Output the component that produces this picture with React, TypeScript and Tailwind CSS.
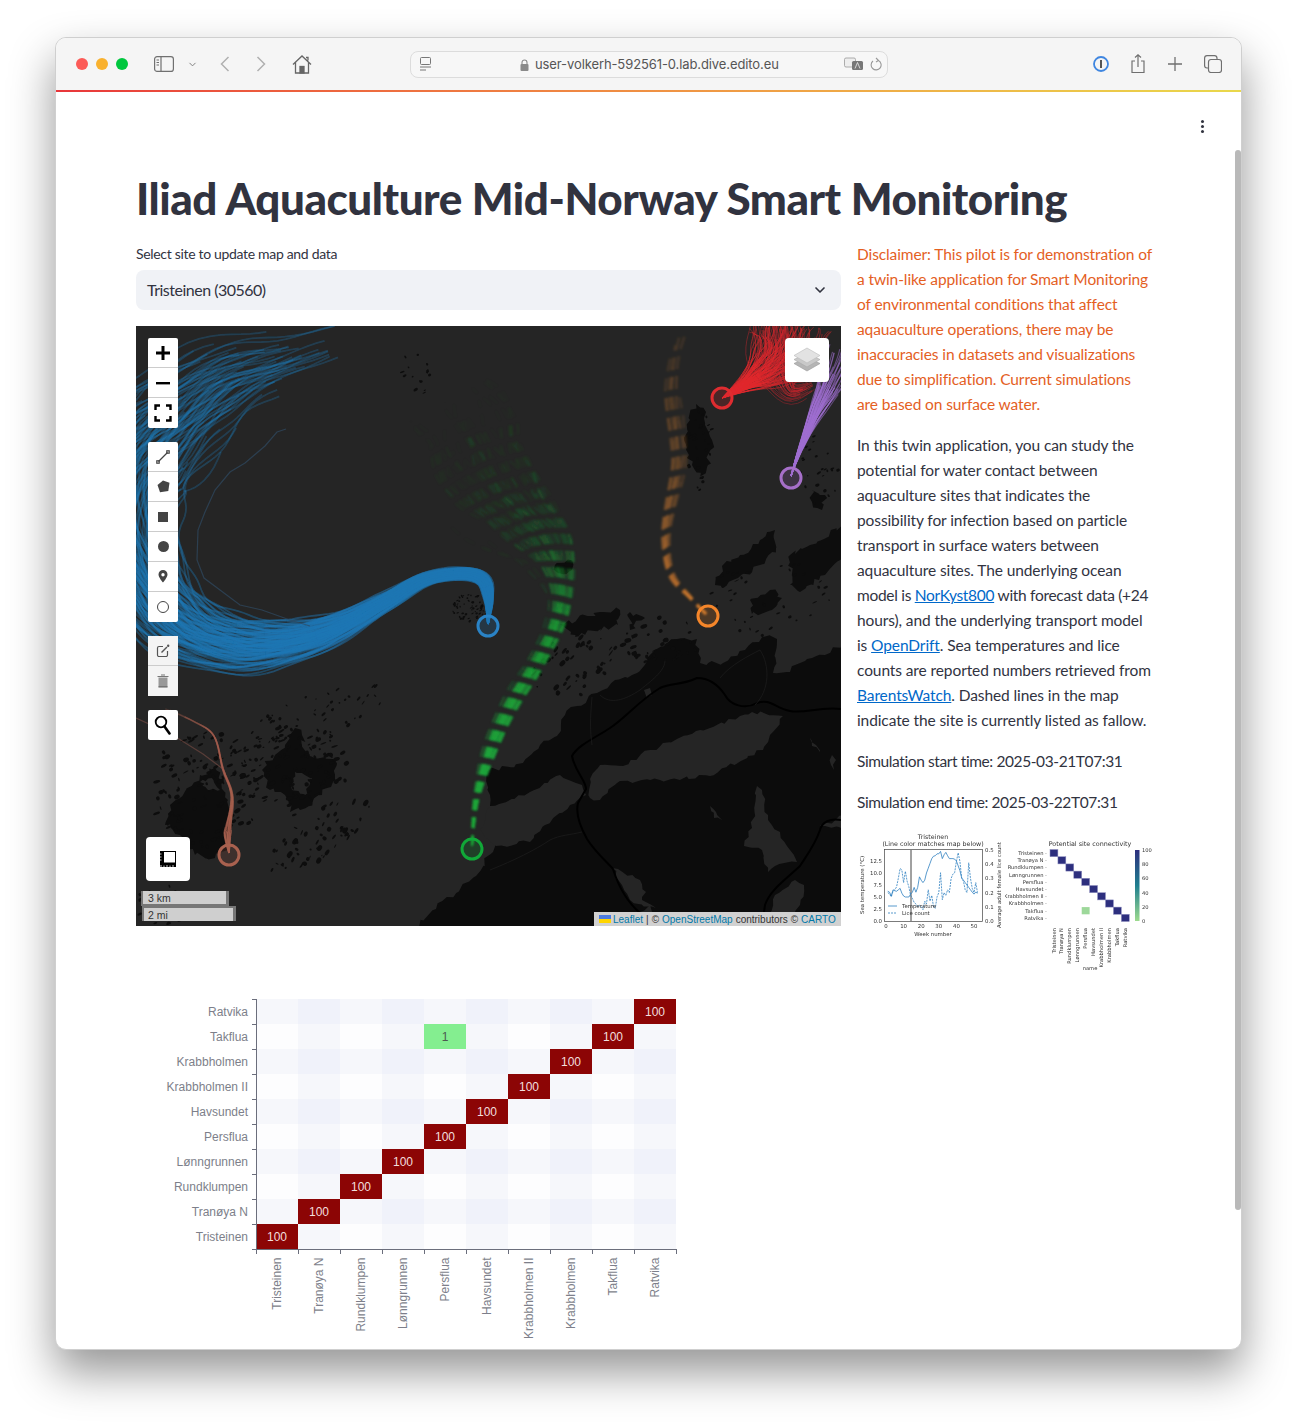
import { ChevronDown } from "lucide-react";

type Pt = [number, number, number];

function rng(seed: number) {
  let s = seed;
  return () => {
    s = (s * 16807) % 2147483647;
    return (s - 1) / 2147483646;
  };
}

// sample a catmull-rom line through the control points
function sample(points: Pt[], perSeg: number): Pt[] {
  const out: Pt[] = [];
  for (let i = 0; i < points.length - 1; i++) {
    const p0 = points[Math.max(i - 1, 0)];
    const p1 = points[i];
    const p2 = points[i + 1];
    const p3 = points[Math.min(i + 2, points.length - 1)];
    for (let k = 0; k < perSeg; k++) {
      const t = k / perSeg;
      const v = [0, 1, 2].map(
        (j) =>
          0.5 *
          (2 * p1[j] +
            (p2[j] - p0[j]) * t +
            (2 * p0[j] - 5 * p1[j] + 4 * p2[j] - p3[j]) * t * t +
            (3 * p1[j] - p0[j] - 3 * p2[j] + p3[j]) * t * t * t)
      );
      out.push([v[0], v[1], v[2]]);
    }
  }
  out.push(points[points.length - 1]);
  return out;
}

// break up the straight edges of a polygon so it reads as a coastline
function coast(poly: string, seed: number, amp = 5, step = 5) {
  const nums = (poly.match(/-?[\d.]+/g) ?? []).map(Number);
  const r = rng(seed);
  const out: string[] = [];
  for (let i = 0; i < nums.length; i += 2) {
    const x1 = nums[i];
    const y1 = nums[i + 1];
    const x2 = nums[(i + 2) % nums.length];
    const y2 = nums[(i + 3) % nums.length];
    const len = Math.hypot(x2 - x1, y2 - y1);
    const n = Math.max(1, Math.round(len / step));
    for (let k = 0; k < n; k++) {
      const t = k / n;
      const j = k === 0 ? 0 : amp;
      out.push(`${(x1 + (x2 - x1) * t + (r() - 0.5) * j).toFixed(1)},${(y1 + (y2 - y1) * t + (r() - 0.5) * j).toFixed(1)}`);
    }
  }
  return `M${out.join(" L")} Z`;
}

function Plume({
  points,
  count,
  color,
  width,
  dash,
  from,
  to,
  seed,
  chunks = 6,
  soft = "soft",
}: {
  points: Pt[];
  count: number;
  color: string;
  width: number;
  dash?: string;
  from: number;
  to: number;
  seed: number;
  chunks?: number;
  soft?: string;
}) {
  const r = rng(seed);
  const base = sample(points, 8);
  const lines = [];
  for (let l = 0; l < count; l++) {
    const u = r() + r() - 1;
    const ph = r() * 6;
    const end = 0.72 + r() * 0.28;
    const pts = base.slice(0, Math.floor(base.length * end)).map((p, i) => {
      const a = base[Math.max(i - 1, 0)];
      const b = base[Math.min(i + 1, base.length - 1)];
      const dx = b[0] - a[0];
      const dy = b[1] - a[1];
      const d = Math.hypot(dx, dy) || 1;
      const o = u * p[2] + Math.sin(i * 0.5 + ph) * p[2] * 0.06;
      return [p[0] - (dy / d) * o, p[1] + (dx / d) * o];
    });
    const size = Math.ceil(pts.length / chunks);
    let run = 0;
    for (let c = 0; c < chunks; c++) {
      const part = pts.slice(c * size, (c + 1) * size + 1);
      if (part.length < 2) continue;
      lines.push(
        <polyline
          key={`${l}-${c}`}
          points={part.map((p) => `${p[0].toFixed(1)},${p[1].toFixed(1)}`).join(" ")}
          fill="none"
          stroke={color}
          strokeWidth={width}
          strokeDasharray={dash}
          strokeDashoffset={dash ? run : undefined}
          opacity={from + ((to - from) * c) / (chunks - 1)}
        />
      );
      // carry the dash phase over into the next piece
      for (let i = 1; i < part.length; i++) {
        run += Math.hypot(part[i][0] - part[i - 1][0], part[i][1] - part[i - 1][1]);
      }
    }
  }
  return <g filter={`url(#${soft})`}>{lines}</g>;
}

function Islands({ x, y, rx, ry, n, seed, max = 3, angle = 0 }: { x: number; y: number; rx: number; ry: number; n: number; seed: number; max?: number; angle?: number }) {
  const r = rng(seed);
  const items = [];
  for (let i = 0; i < n; i++) {
    const a = r() * 6.283;
    const d = Math.sqrt(r());
    const cx = x + Math.cos(a) * d * rx;
    const cy = y + Math.sin(a) * d * ry;
    items.push(
      <ellipse
        key={i}
        cx={cx}
        cy={cy}
        rx={0.6 + r() * max}
        ry={0.5 + r() * max * 0.6}
        transform={`rotate(${-35 + r() * 20} ${cx} ${cy})`}
      />
    );
  }
  return <g fill="#0d0d0d" transform={`rotate(${angle} ${x} ${y})`}>{items}</g>;
}

function Marker({ x, y, color }: { x: number; y: number; color: string }) {
  return <circle cx={x} cy={y} r={10} fill={color} fillOpacity={0.2} stroke={color} strokeWidth={3} />;
}

const fjords = [
  "490,806 530,792 560,775 582,785 586,795 570,805 545,825 530,842 496,846 480,830",
  "590,779 600,765 623,766 650,750 677,739 710,728 740,716 752,712 783,716 770,735 763,750 710,776 660,780 617,783 600,800 590,798",
  "757,786 762,790 768,820 780,832 797,862 775,866 768,872 762,850 744,846 752,828",
  "612,868 640,880 646,892 642,900 656,908 630,900 622,885",
  "775,895 795,880 804,885 800,905 785,930 765,930",
  "820,826 845,815 845,830 825,826",
  "810,738 816,745 820,752 812,746",
  "832,755 836,760 834,770 831,765",
  "710,806 716,812 722,820 714,818",
  "640,912 650,905 660,918 648,916",
  "644,690 650,688 652,695 646,698",
];

const isles = [
  "186,790 200,775 215,768 222,782 228,800 233,825 228,845 215,858 195,855 180,835 165,825 170,805",
  "262,770 275,755 285,745 295,728 302,735 305,755 320,758 335,760 335,780 322,795 300,810 290,812 285,795 270,790",
  "696,404 706,412 705,425 712,440 708,465 700,478 692,465 684,440 690,420",
  "715,585 722,566 740,555 760,540 775,530 776,548 760,565 738,578 722,588",
  "750,600 770,590 782,598 772,610 752,614",
  "790,555 810,545 845,525 845,555 825,575 800,592 790,585",
  "560,625 600,612 620,610 618,625 575,635",
  "630,612 645,618 630,630",
  "555,565 570,560 572,570 558,573",
  "812,490 825,495 822,510 812,502",
];

function MapDrawing() {
  return (
    <svg viewBox="136 326 705 600" className="block w-full h-full">
      <defs>
        <filter id="soft" x="-10%" y="-10%" width="120%" height="120%">
          <feGaussianBlur stdDeviation="0.6" />
        </filter>
        <filter id="softer" x="-10%" y="-10%" width="120%" height="120%">
          <feGaussianBlur stdDeviation="1.1" />
        </filter>
      </defs>
      <rect x="136" y="326" width="705" height="600" fill="#252525" />
      {/* mainland */}
      <path
        fill="#0c0c0c"
        d={coast(
          "412,932 436,909 476,876 496,843 490,806 484,772 523,763 540,745 557,736 565,715 577,706 597,693 615,680 637,673 655,650 677,639 697,639 700,663 723,663 745,650 767,636 777,639 773,673 790,672 807,659 825,655 848,640 848,932",
          3
        )}
      />
      {/* fjords and lakes */}
      <g fill="#252525">
        {fjords.map((f, i) => (
          <path key={i} d={coast(f, 100 + i, 4, 5)} />
        ))}
      </g>
      {/* roads */}
      <g fill="none">
        <path
          stroke="#000"
          strokeWidth="2"
          d="M841,709 C820,706 805,714 790,711 C775,708 770,698 757,703 C745,710 730,705 725,695 C715,680 705,678 697,678 C680,686 672,682 660,688 C640,700 625,718 610,728 C595,738 578,745 572,756 C575,772 586,780 586,789 L578,803 C575,815 582,830 587,839 C595,852 610,865 613,869 C618,885 625,900 640,913"
        />
        <path stroke="#000" strokeWidth="2" d="M841,820 C830,818 822,822 820,830 C815,845 805,858 800,866 C785,880 770,890 765,905 L762,926" />
        <path stroke="#1c1c1c" strokeWidth="0.8" d="M490,870 C515,860 535,850 550,840 C560,835 570,835 582,832" />
        <path stroke="#1c1c1c" strokeWidth="0.8" d="M592,697 C590,720 590,730 592,745 M600,695 C610,705 625,700 640,690 C655,678 665,670 665,660 M720,678 C730,665 750,655 760,650 C770,665 770,690 755,705" />
      </g>
      {/* islands */}
      <g fill="#0d0d0d">
        {isles.map((f, i) => (
          <path key={i} d={coast(f, 200 + i, 6, 4)} />
        ))}
      </g>
      <path fill="#252525" d={coast("200,782 212,778 220,790 208,790", 301, 3, 3)} />
      <path fill="#252525" d={coast("295,772 312,778 305,795 292,790", 302, 3, 3)} />
      <Islands x={205} y={790} rx={55} ry={60} n={120} seed={11} max={3} />
      <Islands x={295} y={770} rx={55} ry={45} n={110} seed={23} max={3} />
      <Islands x={310} y={720} rx={90} ry={25} n={60} seed={31} max={2} angle={-25} />
      <Islands x={320} y={835} rx={60} ry={22} n={60} seed={37} max={3} angle={-35} />
      <Islands x={470} y={608} rx={18} ry={14} n={70} seed={41} max={1} />
      <Islands x={415} y={375} rx={18} ry={22} n={16} seed={43} max={2} />
      <Islands x={700} y={450} rx={15} ry={40} n={30} seed={47} max={2} />
      <Islands x={770} y={600} rx={60} ry={45} n={40} seed={53} max={2} />
      <Islands x={575} y={665} rx={45} ry={30} n={50} seed={59} max={3} angle={-25} />
      <Islands x={660} y={640} rx={40} ry={24} n={40} seed={61} max={3} />
      <Islands x={820} y={470} rx={20} ry={40} n={24} seed={67} max={2} />
      <Islands x={165} y={905} rx={30} ry={20} n={24} seed={71} max={2} />

      {/* particle tracks */}
      <Plume
        seed={5}
        points={[
          [488, 624, 0],
          [489, 600, 5],
          [484, 580, 8],
          [462, 573, 7],
          [425, 579, 8],
          [385, 601, 11],
          [340, 625, 17],
          [290, 640, 26],
          [240, 642, 34],
          [190, 626, 42],
          [155, 590, 50],
          [130, 530, 64],
          [135, 470, 72],
          [175, 425, 68],
          [225, 385, 52],
          [285, 362, 36],
          [345, 342, 24],
        ]}
        count={130}
        color="#1f77b4"
        width={1.8}
        from={0.6}
        to={0.3}
        chunks={8}
      />
      <polyline
        fill="none"
        stroke="#2f4a63"
        strokeOpacity="0.7"
        strokeWidth="1.2"
        points="286,429 277,432 265,446 245,463 230,472 215,490 205,512 198,530 197,560 204,578 220,590 240,605 262,610 290,620 310,626"
      />
      <Plume
        seed={7}
        points={[
          [472, 846, 0],
          [476, 800, 3],
          [490, 750, 8],
          [510, 705, 10],
          [535, 665, 10],
          [555, 625, 11],
          [560, 590, 16],
          [545, 545, 34],
          [510, 510, 50],
          [475, 470, 66],
          [455, 425, 70],
          [440, 400, 66],
        ]}
        count={60}
        color="#1fa83c"
        width={1.8}
        dash="11 7"
        from={0.34}
        to={0.03}
        chunks={8}
        soft="softer"
      />
      <Plume
        seed={9}
        points={[
          [706, 614, 0],
          [690, 597, 1],
          [672, 575, 3],
          [666, 540, 4],
          [672, 500, 6],
          [680, 460, 8],
          [676, 420, 9],
          [673, 385, 8],
          [678, 350, 7],
          [686, 322, 7],
        ]}
        count={7}
        color="#c9762f"
        width={3}
        dash="13 7"
        from={0.42}
        to={0.14}
        chunks={6}
        soft="softer"
      />
      <Plume
        seed={13}
        points={[
          [722, 398, 0],
          [745, 384, 10],
          [768, 368, 28],
          [785, 348, 44],
          [790, 322, 56],
        ]}
        count={120}
        color="#e0282d"
        width={1}
        from={0.75}
        to={0.45}
        chunks={4}
      />
      <Plume
        seed={15}
        points={[
          [772, 322, 26],
          [776, 360, 30],
          [790, 392, 14],
          [815, 385, 6],
        ]}
        count={40}
        color="#c5262c"
        width={1}
        from={0.45}
        to={0.4}
        chunks={3}
      />
      <Plume
        seed={17}
        points={[
          [791, 476, 0],
          [800, 450, 2.5],
          [815, 415, 8],
          [830, 385, 16],
          [850, 345, 28],
        ]}
        count={50}
        color="#9f6fd0"
        width={1.1}
        from={0.85}
        to={0.5}
        chunks={4}
      />
      <Plume
        seed={19}
        points={[
          [229, 853, 0],
          [228, 836, 4],
          [229, 825, 3],
          [232, 805, 1.5],
          [231, 790, 1],
          [223, 769, 0.6],
          [214, 736, 0.3],
          [193, 721, 0.3],
          [159, 706, 0.3],
        ]}
        count={8}
        color="#a8604f"
        width={1.5}
        from={0.85}
        to={0.25}
        chunks={5}
      />
      <polyline fill="none" stroke="#8c564b" strokeOpacity="0.5" strokeWidth="1.2" points="223,769 203,754 179,739 160,729 136,718" />
      <Marker x={488} y={626} color="#2a83c6" />
      <Marker x={472} y={849} color="#11a838" />
      <Marker x={708} y={616} color="#f5862a" />
      <Marker x={722} y={398} color="#df2c30" />
      <Marker x={791} y={478} color="#a66fc9" />
      <Marker x={229} y={855} color="#a9614f" />
    </svg>
  );
}

function MapButton({ children, last, muted }: { children: React.ReactNode; last?: boolean; muted?: boolean }) {
  return (
    <div className={`w-[30px] h-[30px] flex items-center justify-center ${last ? "" : "border-b border-[#ccc]"} ${muted ? "bg-[#f4f4f4]" : ""}`}>
      {children}
    </div>
  );
}

function MapControls() {
  return (
    <div className="absolute left-3 top-3 flex flex-col gap-[14px]">
      <div className="w-[30px] rounded-[2px] bg-white">
        <MapButton>
          <svg width="16" height="16" viewBox="0 0 16 16"><path d="M1 6.500h5.500V1h3v5.500H15v3H9.500V15h-3V9.500H1z" fill="#000" /></svg>
        </MapButton>
        <MapButton>
          <svg width="16" height="16" viewBox="0 0 16 16"><rect x="1" y="7" width="14" height="2.400" fill="#000" /></svg>
        </MapButton>
        <MapButton last>
          <svg width="18" height="18" viewBox="0 0 18 18" fill="none" stroke="#000" strokeWidth="2.400"><path d="M1.500 6V1.500H6M12 1.500h4.500V6M16.500 12v4.500H12M6 16.500H1.500V12" /></svg>
        </MapButton>
      </div>
      <div className="w-[30px] rounded-[2px] bg-white">
        <MapButton>
          <svg width="14" height="14" viewBox="0 0 14 14" fill="none" stroke="#444" strokeWidth="1.200"><path d="M2.500 11.500L11.500 2.500" /><rect x="0.800" y="10.800" width="2.400" height="2.400" /><rect x="10.800" y="0.800" width="2.400" height="2.400" /></svg>
        </MapButton>
        <MapButton>
          <svg width="13" height="13" viewBox="0 0 13 13"><path d="M6 0.500L12.500 2.800 11.300 11 3 12.200 0.500 5z" fill="#444" /></svg>
        </MapButton>
        <MapButton>
          <div className="w-[10px] h-[10px] bg-[#444]" />
        </MapButton>
        <MapButton>
          <div className="w-[11px] h-[11px] rounded-full bg-[#444]" />
        </MapButton>
        <MapButton>
          <svg width="10" height="13" viewBox="0 0 10 13"><path fillRule="evenodd" d="M5 0a4.500 4.500 0 0 1 4.500 4.500C9.500 7.500 5 12.500 5 12.500S.5 7.500.5 4.500A4.500 4.500 0 0 1 5 0zm0 3a1.700 1.700 0 1 0 0 3.400A1.700 1.700 0 0 0 5 3z" fill="#444" /></svg>
        </MapButton>
        <MapButton last>
          <div className="w-[12px] h-[12px] rounded-full border border-[#444]" />
        </MapButton>
      </div>
      <div className="w-[30px] rounded-[2px] bg-[#f4f4f4]">
        <MapButton muted>
          <svg width="14" height="14" viewBox="0 0 14 14" fill="none" stroke="#555" strokeWidth="1.200"><path d="M7 2.500H3A1.500 1.500 0 0 0 1.500 4v7A1.500 1.500 0 0 0 3 12.500h7a1.500 1.500 0 0 0 1.500-1.500V7" /><path d="M5.500 8.500L11 3" strokeWidth="1.400" /><circle cx="12.200" cy="1.800" r="0.600" fill="#555" /></svg>
        </MapButton>
        <MapButton muted last>
          <svg width="12" height="14" viewBox="0 0 12 14"><rect x="1.500" y="3.500" width="9" height="10" fill="#999" /><path d="M0.500 2.500h11M4 1h4" stroke="#777" strokeWidth="1.200" /><path d="M1.500 12.800h9" stroke="#666" strokeWidth="1" /></svg>
        </MapButton>
      </div>
      <div className="w-[30px] h-[30px] bg-white rounded-[2px] flex items-center justify-center">
        <svg width="18" height="20" viewBox="0 0 18 20" fill="none" stroke="#000"><circle cx="7" cy="7" r="5.300" strokeWidth="1.800" /><path d="M10.500 11.500L15.500 18.500" strokeWidth="2.600" strokeLinecap="round" /></svg>
      </div>
    </div>
  );
}

function MapPanel() {
  return (
    <div className="relative w-[705px] h-[600px] mt-4 overflow-hidden bg-[#252525]">
      <MapDrawing />
      <MapControls />
      {/* layers */}
      <div className="absolute right-3 top-3 w-[44px] h-[44px] rounded-[4px] bg-white flex items-center justify-center">
        <svg width="28" height="26" viewBox="0 0 28 26">
          <path d="M14 10L1 16.500 14 24l13-7.500z" fill="#b5b5b5" stroke="#999" strokeWidth="0.600" />
          <path d="M14 6L1 12.500 14 20l13-7.500z" fill="#c9c9c9" stroke="#aaa" strokeWidth="0.600" />
          <path d="M14 1L1 8.500 14 16l13-7.500z" fill="#e2e2e2" stroke="#bbb" strokeWidth="0.600" />
        </svg>
      </div>
      {/* measure and scale */}
      <div className="absolute left-[5px] bottom-[5px] flex flex-col items-start">
        <div className="ml-[5px] w-[44px] h-[44px] rounded-[4px] bg-white flex items-center justify-center mb-[10px]">
          <svg width="16" height="16" viewBox="0 0 16 16">
            <path fillRule="evenodd" fill="#000" d="M0 0h16v16H0zM4 1v10.500h11V1z" />
            <path stroke="#fff" strokeWidth="0.800" d="M1 14v2M4 14.500v1.500M7 14v2M10 14.500v1.500M13 14v2M0 3h1.500M0 6h1.500M0 9h1.500" />
          </svg>
        </div>
        <div className="w-[88px] h-[15px] bg-[#cfcfcf] border-2 border-t-0 border-[#777] border-r-[3px] text-[10.5px] leading-[15px] pl-[5px] text-[#333] font-['Liberation_Sans',sans-serif] box-border">
          3 km
        </div>
        <div className="w-[94px] h-[15px] ml-[1px] bg-[#cfcfcf] border-2 border-b-0 border-[#777] border-r-[3px] text-[10.5px] leading-[14px] pl-[4px] text-[#333] font-['Liberation_Sans',sans-serif] box-border">
          2 mi
        </div>
      </div>
      {/* attribution */}
      <div className="absolute right-0 bottom-0 h-[14px] w-[247px] bg-[#d1d1d1] pl-[5px] flex items-center whitespace-nowrap text-[10px] text-[#333] font-['Liberation_Sans',sans-serif]">
        <span className="inline-flex flex-col w-[12px] h-[8px] mr-[1px]">
          <span className="h-1/2 bg-[#4C7BE1]" />
          <span className="h-1/2 bg-[#FFD500]" />
        </span>
        <span className="text-[#0078A8] ml-[1px]">Leaflet</span>
        <span className="mx-[3px]">|</span>© <span className="text-[#0078A8] mx-[3px]">OpenStreetMap</span> contributors ©{" "}
        <span className="text-[#0078A8] ml-[3px]">CARTO</span>
      </div>
    </div>
  );
}

const sites = ["Tristeinen", "Tranøya N", "Rundklumpen", "Lønngrunnen", "Persflua", "Havsundet", "Krabbholmen II", "Krabbholmen", "Takflua", "Ratvika"];

function Heatmap() {
  const x0 = 120;
  const y0 = 9;
  const cw = 42;
  const ch = 25;
  return (
    <svg width="560" height="351" viewBox="0 0 560 351" className="block mt-[64px]" fontFamily="'Liberation Sans', sans-serif">
      {sites.map((_, row) =>
        sites.map((__, col) => {
          const rt = row % 2 === 1;
          const ct = col % 2 === 1;
          const diag = row === col;
          const one = row === 8 && col === 4;
          const fill = diag ? "#8c0505" : one ? "#84ee90" : rt && ct ? "#f0f2fa" : rt || ct ? "#f6f7fb" : "#fdfdfe";
          const x = x0 + col * cw;
          const y = y0 + (9 - row) * ch;
          return (
            <g key={`${row}-${col}`}>
              <rect x={x} y={y} width={cw} height={ch} fill={fill} />
              {(diag || one) && (
                <text x={x + cw / 2} y={y + 17} textAnchor="middle" fontSize="12" fill={diag ? "#f2dede" : "#4d5a50"}>
                  {diag ? "100" : "1"}
                </text>
              )}
            </g>
          );
        })
      )}
      <g stroke="#6b6e7c" strokeWidth="1">
        <path d={`M${x0 + 0.5} ${y0} V${y0 + 250.5} H${x0 + 420.5}`} fill="none" />
        {sites.map((_, i) => (
          <path key={i} d={`M${x0 - 4} ${y0 + i * ch + 0.5} H${x0} M${x0 + i * cw + 42.5} ${y0 + 250} V${y0 + 255}`} />
        ))}
        <path d={`M${x0 - 4} ${y0 + 250.5} H${x0} M${x0 + 0.5} ${y0 + 250} V${y0 + 255}`} />
      </g>
      {sites.map((s, i) => (
        <g key={s} fontSize="12" fill="#7d7f8a">
          <text x={x0 - 8} y={y0 + (9 - i) * ch + 17} textAnchor="end">{s}</text>
          <text transform={`translate(${x0 + i * cw + 25} ${y0 + 258.5}) rotate(-90)`} textAnchor="end">
            {s}
          </text>
        </g>
      ))}
    </svg>
  );
}

const temp = [6.2, 6, 5.2, 6.5, 6.3, 6.2, 6.5, 6.8, 5.8, 5.2, 5, 5, 5, 5.6, 6, 7, 6, 7, 9.2, 8.5, 8, 8.5, 10, 11, 12, 13, 13.5, 13.6, 14, 14, 14.5, 13, 13.8, 14.3, 13.6, 13, 13, 13, 12.9, 12.5, 11.5, 10.5, 9, 8.5, 8, 7.5, 7, 6.5, 6, 5.6, 6, 5.8];
const lice = [0.2, 0.19, 0.17, 0.21, 0.22, 0.24, 0.3, 0.37, 0.36, 0.27, 0.35, 0.28, 0.24, 0.18, 0.16, 0.13, 0.12, 0.1, 0.11, 0.1, 0.08, 0.14, 0.12, 0.22, 0.14, 0.18, 0.1, 0.09, 0.17, 0.2, 0.34, 0.15, 0.2, 0.18, 0.22, 0.2, 0.3, 0.33, 0.34, 0.42, 0.48, 0.42, 0.3, 0.28, 0.22, 0.2, 0.41, 0.3, 0.23, 0.2, 0.27, 0.2];

function TempChart() {
  const wx = (w: number) => 886 + w * 1.76;
  const ty = (v: number) => 921 - v * 4.8;
  const ly = (v: number) => 921 - v * 142;
  return (
    <svg width="148" height="115" viewBox="857 832 148 115" className="block blur-[0.35px]" fontFamily="'DejaVu Sans', sans-serif" fill="#333">
      <text x="933" y="839" fontSize="6.3" textAnchor="middle">Tristeinen</text>
      <text x="933" y="846" fontSize="6.3" textAnchor="middle">(Line color matches map below)</text>
      <rect x="884.5" y="849.5" width="98" height="72" fill="none" stroke="#444" strokeWidth="0.7" />
      <path d="M911 850V921" stroke="#111" strokeWidth="0.8" />
      <polyline fill="none" stroke="#2f80c0" strokeWidth="0.8" points={temp.map((v, i) => `${wx(i + 1)},${ty(v)}`).join(" ")} />
      <polyline fill="none" stroke="#2f80c0" strokeWidth="0.8" strokeDasharray="2 1" points={lice.map((v, i) => `${wx(i + 1)},${ly(v)}`).join(" ")} />
      <path d="M888 906h9" stroke="#2f80c0" strokeWidth="0.8" />
      <path d="M888 913h9" stroke="#2f80c0" strokeWidth="0.8" strokeDasharray="2 1" />
      <text x="902" y="908" fontSize="5.4">Temperature</text>
      <text x="902" y="915" fontSize="5.4">Lice count</text>
      {["0.0", "2.5", "5.0", "7.5", "10.0", "12.5"].map((t, i) => (
        <text key={t} x="882" y={923 - i * 12} fontSize="5.4" textAnchor="end">{t}</text>
      ))}
      {["0.0", "0.1", "0.2", "0.3", "0.4", "0.5"].map((t, i) => (
        <text key={t} x="985" y={923 - i * 14.2} fontSize="5.4">{t}</text>
      ))}
      {[0, 10, 20, 30, 40, 50].map((w) => (
        <text key={w} x={wx(w)} y="928" fontSize="5.4" textAnchor="middle">{w}</text>
      ))}
      <text x="933" y="936" fontSize="5.4" textAnchor="middle">Week number</text>
      <text transform="translate(864 885) rotate(-90)" fontSize="5.4" textAnchor="middle">Sea temperature (°C)</text>
      <text transform="translate(1001 885) rotate(-90)" fontSize="5.4" textAnchor="middle">Average adult female lice count</text>
    </svg>
  );
}

function ConnectivityChart() {
  const cx = (i: number) => 1050 + i * 7.93;
  const cy = (i: number) => 849.5 + i * 7.2;
  return (
    <svg width="147" height="140" viewBox="1005 835 147 140" className="block blur-[0.35px]" fontFamily="'DejaVu Sans', sans-serif" fill="#333">
      <defs>
        <linearGradient id="bar" x1="0" y1="0" x2="0" y2="1">
          <stop offset="0" stopColor="#2d2f7e" />
          <stop offset="0.5" stopColor="#1f7f8f" />
          <stop offset="1" stopColor="#9ddb8e" />
        </linearGradient>
      </defs>
      <text x="1090" y="846" fontSize="6.4" textAnchor="middle">Potential site connectivity</text>
      {sites.map((s, i) => (
        <g key={s}>
          <rect x={cx(i)} y={cy(i)} width="7.9" height="7.2" fill="#2d2f7e" stroke="#8f90c0" strokeWidth="0.5" />
          <text x="1047" y={cy(i) + 5.5} fontSize="5.2" textAnchor="end">{s} -</text>
          <text transform={`translate(${cx(i) + 5.5} 928) rotate(-90)`} fontSize="5.2" textAnchor="end">{s}</text>
        </g>
      ))}
      <rect x={cx(4)} y={cy(8)} width="7.9" height="7.2" fill="#9dd89a" />
      <rect x="1135" y="850" width="4.5" height="71" fill="url(#bar)" />
      {[100, 80, 60, 40, 20, 0].map((t, i) => (
        <text key={t} x="1142" y={852 + i * 14.2} fontSize="5.2">{t}</text>
      ))}
      <text x="1090" y="970" fontSize="5.2" textAnchor="middle">name</text>
    </svg>
  );
}

function Link({ children }: { children: React.ReactNode }) {
  return <a className="text-[#0068c9] underline">{children}</a>;
}

function SideColumn() {
  return (
    <div className="w-[295px] shrink-0 text-[15.5px] leading-[25px] text-[#31333f] whitespace-nowrap tracking-[-0.1px]">
      <p className="text-[#e4601f]">
        Disclaimer: This pilot is for demonstration of<br />
        a twin-like application for Smart Monitoring<br />
        of environmental conditions that affect<br />
        aqauaculture operations, there may be<br />
        inaccuracies in datasets and visualizations<br />
        due to simplification. Current simulations<br />
        are based on surface water.
      </p>
      <p className="mt-4">
        In this twin application, you can study the<br />
        potential for water contact between<br />
        aquaculture sites that indicates the<br />
        possibility for infection based on particle<br />
        transport in surface waters between<br />
        aquaculture sites. The underlying ocean<br />
        <span className="tracking-[-0.3px]">model is <Link>NorKyst800</Link> with forecast data (+24</span><br />
        hours), and the underlying transport model<br />
        is <Link>OpenDrift</Link>. Sea temperatures and lice<br />
        counts are reported numbers retrieved from<br />
        <Link>BarentsWatch</Link>. Dashed lines in the map<br />
        indicate the site is currently listed as fallow.
      </p>
      <p className="mt-4 tracking-[-0.4px]">Simulation start time: 2025-03-21T07:31</p>
      <p className="mt-4 tracking-[-0.4px]">Simulation end time: 2025-03-22T07:31</p>
      <div className="flex mt-[17px] tracking-normal">
        <TempChart />
        <div className="mt-[3px]">
          <ConnectivityChart />
        </div>
      </div>
    </div>
  );
}

function BrowserBar() {
  return (
    <div className="h-[52px] shrink-0 bg-[#f5f5f5] flex items-center text-[#6f6f6f]">
      <div className="flex items-center gap-2 ml-5">
        <div className="w-3 h-3 rounded-full bg-[#fc5b57]" />
        <div className="w-3 h-3 rounded-full bg-[#f9b12e]" />
        <div className="w-3 h-3 rounded-full bg-[#00c73e]" />
      </div>
      <svg width="20" height="16" viewBox="0 0 20 16" className="ml-[26px]" fill="none" stroke="#707070" strokeWidth="1.2">
        <rect x="0.6" y="0.6" width="18.8" height="14.8" rx="2.5" />
        <path d="M7 0.6v14.8M2.5 4h2.500M2.5 6.5h2.500M2.5 9h2.500" />
      </svg>
      <ChevronDown size={11} strokeWidth={2} className="ml-[13px] text-[#777]" />
      <svg width="10" height="16" viewBox="0 0 10 16" className="ml-[22px]" fill="none" stroke="#b0b0b0" strokeWidth="1.5"><path d="M8.5 1L1.5 8l7 7" /></svg>
      <svg width="10" height="16" viewBox="0 0 10 16" className="ml-[26px]" fill="none" stroke="#b0b0b0" strokeWidth="1.5"><path d="M1.5 1l7 7-7 7" /></svg>
      <svg width="20" height="19" viewBox="0 0 20 19" className="ml-[26px]" fill="none" stroke="#666" strokeWidth="1.3">
        <path d="M1 9.5L10 1l9 8.500M3.5 7.5V18h13V7.500M14 2.500h2v3" />
        <rect x="8" y="11.5" width="4" height="6.5" fill="#666" />
      </svg>
      {/* address bar */}
      <div className="ml-[98px] w-[478px] h-[27px] rounded-[8px] border border-[#dcdcdc] bg-[#f7f7f7] flex items-center relative">
        <svg width="14" height="14" viewBox="0 0 14 14" className="ml-2" fill="none" stroke="#777" strokeWidth="1"><rect x="1.5" y="0.5" width="10" height="7" rx="1" /><path d="M1 10h11M1 13h6" /></svg>
        <svg width="9" height="12" viewBox="0 0 9 12" className="ml-[87px] mt-[1px]" fill="#8a8a8a"><rect x="0.5" y="5" width="8" height="7" rx="1" /><path d="M2 5V3.500a2.500 2.500 0 0 1 5 0V5" fill="none" stroke="#8a8a8a" strokeWidth="1.1" /></svg>
        <span className="ml-[6px] mt-[1px] text-[13px] text-[#555] font-['Inter',sans-serif] tracking-[-0.1px] whitespace-nowrap">
          user-volkerh-592561-0.lab.dive.edito.eu
        </span>
        <svg width="20" height="14" viewBox="0 0 20 14" className="absolute left-[433px]">
          <rect x="0.5" y="1" width="11" height="9" rx="1.5" fill="#eee" stroke="#999" strokeWidth="0.8" />
          <rect x="8" y="4" width="11" height="9" rx="1.5" fill="#777" />
          <path d="M13.5 5.500l2.500 6M13.5 5.500l-2.500 6" stroke="#eee" strokeWidth="0.8" />
        </svg>
        <svg width="12" height="15" viewBox="0 0 12 15" className="absolute left-[459px]" fill="none" stroke="#999" strokeWidth="1.1"><path d="M8.5 3.500A5 5 0 1 1 3 4M6 1l2.500 2.500L6 5" /></svg>
      </div>
      <svg width="16" height="16" viewBox="0 0 16 16" className="ml-[205px]"><circle cx="8" cy="8" r="7" fill="none" stroke="#3f86e0" strokeWidth="1.8" /><rect x="7" y="4" width="2" height="8" fill="#555" /></svg>
      <svg width="16" height="20" viewBox="0 0 16 20" className="ml-[21px]" fill="none" stroke="#6f6f6f" strokeWidth="1.2"><path d="M5 7H2v11.500h12V7h-3M8 13V1M5 3.500L8 .8l3 2.700" /></svg>
      <svg width="14" height="14" viewBox="0 0 14 14" className="ml-[22px]" fill="none" stroke="#6f6f6f" strokeWidth="1.3"><path d="M7 0v14M0 7h14" /></svg>
      <svg width="18" height="18" viewBox="0 0 18 18" className="ml-[22px]" fill="none" stroke="#6f6f6f" strokeWidth="1.2"><rect x="4.5" y="4.5" width="13" height="13" rx="2.5" /><path d="M4.500 13H3A2.500 2.500 0 0 1 .6 10.500V3A2.500 2.500 0 0 1 3 .6h7.500A2.500 2.500 0 0 1 13 3v1.500" /></svg>
    </div>
  );
}

export default function App() {
  return (
    <div className="h-[1423px] overflow-hidden bg-white pl-[55px] pt-[37px] font-['Lato','Noto_Sans',sans-serif]">
      <div className="relative w-[1187px] h-[1313px] rounded-[11px] border border-[#cfcfcf] bg-white overflow-hidden flex flex-col shadow-[0_22px_45px_rgba(0,0,0,0.42)]">
        <BrowserBar />
        <div className="h-[2px] shrink-0 bg-gradient-to-r from-[#e8353a] to-[#e9d84b]" />
        {/* streamlit menu */}
        <div className="absolute left-[1145px] top-[82px] flex flex-col gap-[2px]">
          <div className="w-[3px] h-[3px] rounded-full bg-[#31333f]" />
          <div className="w-[3px] h-[3px] rounded-full bg-[#31333f]" />
          <div className="w-[3px] h-[3px] rounded-full bg-[#31333f]" />
        </div>
        {/* scrollbar */}
        <div className="absolute right-0 top-[112px] w-[6px] h-[1060px] rounded-full bg-[#b9b9b9]" />
        <div className="flex-1 pl-[80px] pt-[83px] min-h-0">
          <h1 className="h-[67px] text-[44px] leading-[46px] font-black text-[#31333f] whitespace-nowrap tracking-[-0.47px]">
            Iliad Aquaculture Mid-Norway Smart Monitoring
          </h1>
          <div className="flex gap-4">
            <div className="w-[705px] shrink-0">
              <div className="h-[28px] text-[14px] leading-[24px] tracking-[-0.32px] text-[#31333f]">Select site to update map and data</div>
              <div className="h-[40px] rounded-[8px] bg-[#f0f2f6] flex items-center justify-between pl-[11px] pr-[13px] text-[16px] tracking-[-0.5px] text-[#31333f]">
                Tristeinen (30560)
                <ChevronDown size={16} strokeWidth={2.5} className="text-[#31333f]" />
              </div>
              <MapPanel />
              <Heatmap />
            </div>
            <SideColumn />
          </div>
        </div>
      </div>
    </div>
  );
}
